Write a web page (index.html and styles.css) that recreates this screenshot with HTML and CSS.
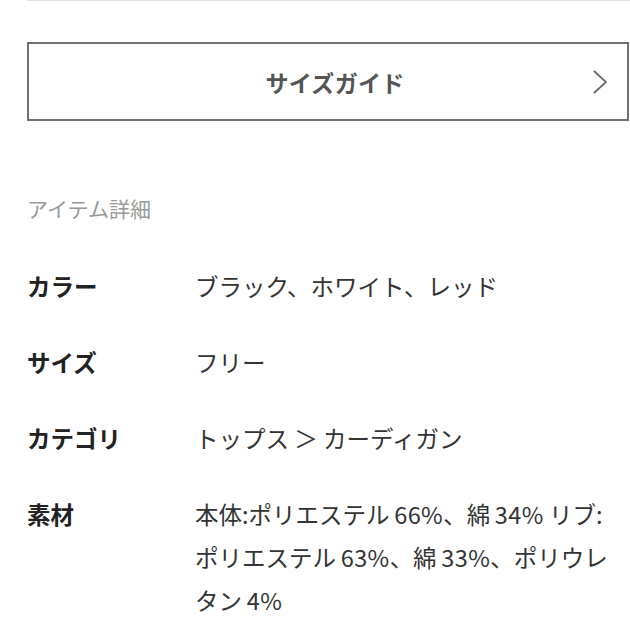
FILE: index.html
```html
<!DOCTYPE html>
<html lang="ja">
<head>
<meta charset="utf-8">
<link rel="stylesheet" href="styles.css">
</head>
<body>
<div class="page">
  <div class="top-rule"></div>
  <div class="guide">
    <span class="guide-spacer"></span>
    <span class="guide-label">サイズガイド</span>
    <svg class="chevron" width="16" height="24" viewBox="0 0 16 24"><polyline points="2,1 14,12 2,23" fill="none" stroke="#666" stroke-width="1.7"/></svg>
  </div>
  <h2 class="section-title">アイテム詳細</h2>
  <dl class="details">
    <dt>カラー</dt><dd>ブラック、ホワイト、レッド</dd>
    <dt>サイズ</dt><dd>フリー</dd>
    <dt>カテゴリ</dt><dd>トップス ＞ カーディガン</dd>
    <dt>素材</dt><dd>本体:ポリエステル<span class="num">66%</span>、綿<span class="num">34%</span> リブ:<br>ポリエステル<span class="num">63%</span>、綿<span class="num">33%</span>、ポリウレ<br>タン<span class="num">4%</span></dd>
  </dl>
</div>
</body>
</html>
```
FILE: styles.css
```css
html, body {
  margin: 0;
  padding: 0;
  background: #fff;
}
body {
  font-family: "Noto Sans CJK JP", "Noto Sans", sans-serif;
  color: #333;
  overflow: hidden;
}
.page {
  padding-left: 27px;
  width: 603px;
}
.top-rule {
  height: 0;
  border-top: 1px solid #e2e2e2;
}
.guide {
  margin-top: 41px;
  height: 75px;
  border: 2px solid #707070;
  display: grid;
  grid-template-columns: 1fr auto 1fr;
  align-items: center;
  padding-left: 14px;
  box-sizing: content-box;
  width: 584px;
}
.guide-label {
  font-size: 23px;
  font-weight: 700;
  color: #555;
  letter-spacing: 0.3px;
  line-height: 30px;
}
.chevron {
  justify-self: end;
  margin-right: 19px;
  display: block;
}
.section-title {
  margin: 73px 0 0 0;
  font-size: 21px;
  font-weight: 400;
  color: #999;
  line-height: 28px;
}
.details {
  margin: 43px 0 0 0;
  display: grid;
  grid-template-columns: 168px 1fr;
  row-gap: 33px;
  font-size: 23.5px;
  line-height: 43px;
}
.details dt {
  font-weight: 700;
  color: #222;
}
.details dd {
  margin: 0;
  color: #333;
  white-space: nowrap;
}
.num {
  margin-left: 0.2em;
  letter-spacing: 0.4px;
}
```
